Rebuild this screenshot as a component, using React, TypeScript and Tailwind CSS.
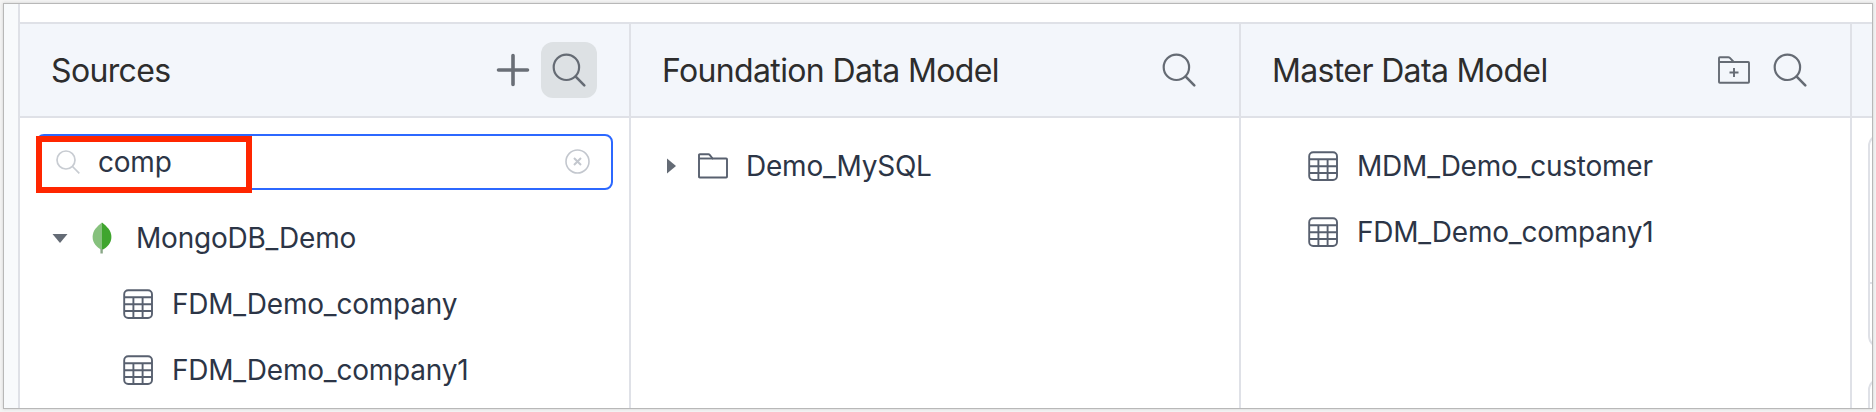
import React from 'react';

function SearchIcon() {
  return (
    <svg className="size-14 shrink-0" viewBox="0 0 56 56" fill="none" stroke="#656b74" strokeWidth="2.2" strokeLinecap="round">
      <circle cx="25.4" cy="25.3" r="12.7" />
      <path d="M34.7 34.7 43.3 43.4" strokeWidth="2.6" />
    </svg>
  );
}

function TableIcon() {
  return (
    <svg className="size-[30px] shrink-0" viewBox="0 0 30 30" fill="none" stroke="#58606f" strokeWidth="1.9">
      <rect x="1.2" y="1.2" width="27.8" height="27.8" rx="4" />
      <path d="M1 8.2h28M1 15.2h28M1 22h28M10.4 8v21M19.6 8v21" />
    </svg>
  );
}

function FolderIcon() {
  return (
    <svg className="h-7 w-8 shrink-0" viewBox="0 0 32 28" fill="none" stroke="#58606f" strokeWidth="1.9" strokeLinejoin="round">
      <path d="M2 6.500V3q0-.8.8-.8h8.600q.8 0 1.300.600l2.900 3.700H29.200q.8 0 .8.800V24.700q0 .8-.8.8H2.800q-.8 0-.8-.8Z" />
      <path d="M2 6.500h14" />
    </svg>
  );
}

function FolderPlusIcon() {
  return (
    <svg className="size-14 shrink-0" viewBox="0 0 56 56" fill="none" stroke="#656b74" strokeWidth="1.9" strokeLinejoin="round">
      <path d="M13 20v-4q0-.8.8-.8h8.400q1 0 1.700.700l3.800 4.100H42.200q.8 0 .8.8V40q0 .8-.8.8H13.800q-.8 0-.8-.8Z" />
      <path d="M13 20h15M28 26v9M23.500 30.500h9" />
    </svg>
  );
}

function LeafIcon() {
  return (
    <svg className="h-8 w-5 shrink-0" viewBox="0 0 20 32">
      <path d="M10 .5C5 4.500.6 8.500.6 15c0 6 4 10.500 9.400 13Z" fill="#86c17d" />
      <path d="M10 .5C15 4.500 19.400 8.500 19.400 15c0 6-4 10.500-9.400 13Z" fill="#3fa52e" />
      <path d="M9.600 27v4.500" stroke="#8aa888" strokeWidth="2.400" />
    </svg>
  );
}

function Header({ title, children }: { title: string; children?: React.ReactNode }) {
  return (
    <div className="flex h-[94px] items-center border-b-2 border-[#dfe1e7] bg-[#f3f6fb] pr-8 pl-8">
      <h2 className="-ml-px flex-1 pt-0.5 text-[32px] leading-10 tracking-[-0.64px] whitespace-nowrap text-[#2d2d2d]">{title}</h2>
      {children}
    </div>
  );
}

const label = 'text-[28px] leading-9 tracking-[-0.22px] whitespace-nowrap text-[#2c3546]';

function TableRow({ name }: { name: string }) {
  return (
    <div className="flex h-[66px] items-center gap-[19px]">
      <TableIcon />
      <span className={label}>{name}</span>
    </div>
  );
}

export default function App() {
  return (
    <div className="h-[412px] w-[1876px] overflow-hidden bg-[#f4f4f4] p-1 font-['Inter',sans-serif]">
      <div className="flex h-[404px] w-[1868px] bg-white shadow-[0_0_0_1px_#b8b8b8,0_0_3px_1px_#cfcfcf]">
        <div className="w-4 shrink-0 border-r-2 border-[#dfe1e7] bg-[#f8fafc]" />
        <div className="flex min-w-0 flex-1 flex-col overflow-hidden">
          <div className="h-5 shrink-0 border-b-2 border-[#dfe1e7]" />
          <div className="flex min-h-0 flex-1">
            <section className="w-[611px] shrink-0 border-r-2 border-[#dfe1e7]">
              <Header title="Sources">
                <svg className="size-14 shrink-0" viewBox="0 0 56 56" stroke="#6a6f77" strokeWidth="3.600" strokeLinecap="round">
                  <path d="M28 13.500v29M13.500 28h29" />
                </svg>
                <div className="rounded-xl bg-[#dde1e4]">
                  <SearchIcon />
                </div>
              </Header>
              <div className="relative mt-4 ml-4 flex h-14 w-[577px] items-center rounded-lg border-2 border-[#2c68ff] pr-[20px] pl-[17px]">
                <svg className="size-7 shrink-0" viewBox="0 0 28 28" fill="none" stroke="#c8ccd2" strokeWidth="1.700">
                  <circle cx="11" cy="12" r="9" />
                  <path d="m17.500 18.500 6.800 6.800" />
                </svg>
                <span className={`ml-[15px] flex-1 ${label}`}>comp</span>
                <svg className="size-[26px] shrink-0" viewBox="0 0 26 26" fill="none" stroke="#c3c7ce" strokeWidth="1.600">
                  <circle cx="12.500" cy="12.500" r="11.500" />
                  <path d="m9 9 7 7M16 9l-7 7" strokeWidth="2" />
                </svg>
                <div className="absolute top-0 -left-0.5 h-[57px] w-[216px] border-6 border-[#ff2600]" />
              </div>
              <div className="mt-[15px] pl-8">
                <div className="flex h-[66px] items-center">
                  <svg className="h-[9px] w-4 shrink-0" viewBox="0 0 16 9"><path d="M.5 0h15L8 9Z" fill="#646b75" /></svg>
                  <div className="mr-6 ml-6 flex"><LeafIcon /></div>
                  <span className={label}>MongoDB_Demo</span>
                </div>
                <div className="pl-[71px]">
                  <TableRow name="FDM_Demo_company" />
                  <TableRow name="FDM_Demo_company1" />
                </div>
              </div>
            </section>
            <section className="w-[610px] shrink-0 border-r-2 border-[#dfe1e7]">
              <Header title="Foundation Data Model">
                <SearchIcon />
              </Header>
              <div className="mt-[15px] flex h-[66px] items-center pl-9">
                <svg className="h-4 w-[9px] shrink-0" viewBox="0 0 9 16"><path d="M0 .5v15L9 8Z" fill="#646b75" /></svg>
                <div className="mr-[17px] ml-[21px] flex"><FolderIcon /></div>
                <span className={label}>Demo_MySQL</span>
              </div>
            </section>
            <section className="w-[611px] shrink-0 border-r-2 border-[#dfe1e7]">
              <Header title="Master Data Model">
                <FolderPlusIcon />
                <SearchIcon />
              </Header>
              <div className="mt-[15px] pl-[67px]">
                <TableRow name="MDM_Demo_customer" />
                <TableRow name="FDM_Demo_company1" />
              </div>
            </section>
            <section className="min-w-0 flex-1 overflow-hidden">
              <div className="h-[94px] border-b-2 border-[#dfe1e7] bg-[#f3f6fb]" />
              <div className="mt-4 ml-4 flex w-40 flex-col gap-[30px]">
                <div className="h-[214px] rounded-xl border-2 border-[#dfe1e7]">
                  <div className="h-[148px] border-b-2 border-[#dfe1e7]" />
                </div>
                <div className="h-40 rounded-xl border-2 border-[#dfe1e7]" />
              </div>
            </section>
          </div>
        </div>
      </div>
    </div>
  );
}
